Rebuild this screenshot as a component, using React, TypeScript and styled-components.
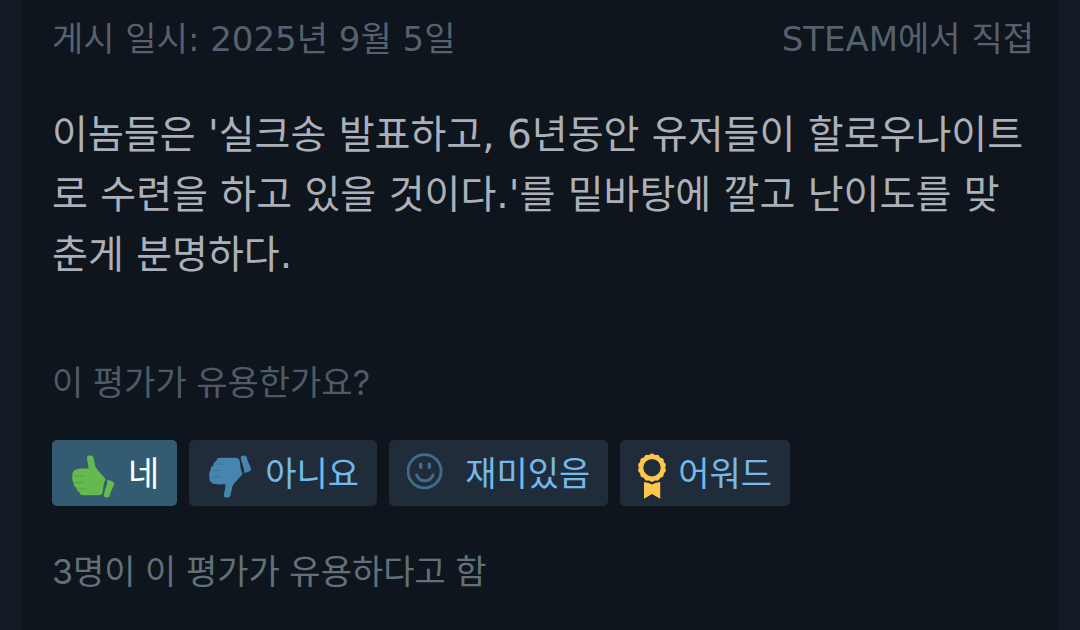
import React, { useState } from "react";
import styled, { createGlobalStyle } from "styled-components";

const GlobalStyle = createGlobalStyle`
  * { box-sizing: border-box; }
  body {
    margin: 0;
    background: #131a24;
    font-family: Inter, "Noto Sans CJK KR", sans-serif;
    font-size: 34px;
    line-height: 48px;
  }
  p { margin: 0; }
`;

const wideFont = `"DejaVu Sans", "Noto Sans CJK KR", sans-serif`;

const Review = styled.article`
  margin: 0 22px;
  min-height: 100vh;
  padding: 15px 24px 34px 30px;
  background: #0e151c;
`;

const Meta = styled.header`
  display: flex;
  justify-content: space-between;
  font-family: ${wideFont};
  color: #56616d;
`;

const Body = styled.p`
  && { margin-top: 42px; }
  padding-right: 6px;
  font-family: ${wideFont};
  font-size: 39px;
  line-height: 60px;
  color: #acb0b9;
`;

const Question = styled.p`
  && { margin: 74px 0 33px; }
  color: #4f5a67;
`;

const Votes = styled.div`
  display: flex;
  flex-wrap: wrap;
  gap: 12px;
`;

const VoteButton = styled.button<{ $active?: boolean }>`
  display: flex;
  align-items: center;
  gap: 12px;
  height: 66px;
  padding: 0 18px;
  border: 0;
  border-radius: 5px;
  font: inherit;
  white-space: nowrap;
  cursor: pointer;
  color: ${(p) => (p.$active ? "#ffffff" : "#74b9e8")};
  background: ${(p) => (p.$active ? "#335c73" : "#212c3b")};
`;

const Label = styled.span`
  padding-top: 2px;
`;

const Icon = styled.svg`
  flex: none;
  height: 52px;
`;

const Tally = styled.p`
  && { margin-top: 42px; }
  color: #62707a;
`;

function Thumb({ down = false }: { down?: boolean }) {
  const fill = down ? "#4685ae" : "#66b94e";
  const line = down ? "#3d79a1" : "#59a845";
  return (
    <Icon width="46" viewBox="0 -4.5 46 52" aria-hidden="true">
      <g transform={down ? "matrix(1 0 0 -1 0 50)" : undefined}>
        <path
          fill={fill}
          d="M17 5.5C17.3 3.6 22.4 3.2 23.4 5.8L25.3 14.8C27.3 19 31.5 22.3 35.6 27.7C33.4 31.8 33.4 36 32.6 41C31.8 43 30.4 43.8 28.5 43.8H12.8C10.4 43.8 9.7 42.4 9.4 40.6C7.6 40 6.4 38.5 6.5 36.2C4.2 35 3.2 33.2 3.6 31C2.2 29.2 2 27.4 2.5 25.4C1.8 21.5 3.4 18.6 6.5 17.8C10 16.8 14 17 18.4 17.2C19 13.5 16.6 9 17 5.5Z"
        />
        <path
          fill={fill}
          d="M37.4 28.6C39.3 28.6 43.1 29.8 44 31.4C44.5 34.6 40.4 39.2 39.5 45C37.6 46.5 34.2 46.2 33.7 44C34.2 39 37.4 34 37.4 28.6Z"
        />
        <path fill="none" stroke={line} strokeWidth="1.3" strokeLinecap="round" d="M5 24.5H13M5.5 31H13.5M9 37.3H15" />
      </g>
    </Icon>
  );
}

function Smile() {
  return (
    <Icon width="46" viewBox="0 -2 46 52" aria-hidden="true">
      <g fill="none" stroke="#3f6e8b" strokeLinecap="round">
        <circle cx="17.5" cy="22.2" r="16.6" strokeWidth="2.8" />
        <path strokeWidth="3.4" d="M13.7 15.2V18.4M22.3 15.2V18.4" />
        <path strokeWidth="3" d="M9.7 26C12.3 33.6 23.3 33.6 25.9 26" />
      </g>
    </Icon>
  );
}

function Award() {
  const scallops = Array.from({ length: 14 }, (_, i) => (i * 2 * Math.PI) / 14);
  return (
    <Icon width="28" viewBox="0 -2 28 52" aria-hidden="true">
      <circle cx="14" cy="18.7" r="11" fill="none" stroke="#fdc74c" strokeWidth="4.6" />
      {scallops.map((a) => (
        <circle key={a} cx={14 + 11.8 * Math.sin(a)} cy={18.7 - 11.8 * Math.cos(a)} r="2.4" fill="#fdc74c" />
      ))}
      <path fill="#fdc74c" d="M6 33L10.6 34L14 35.4L17.4 34L22.2 33V49.8L14 45L6 49.8Z" />
    </Icon>
  );
}

export default function App() {
  const [vote, setVote] = useState<"yes" | "no">("yes");
  return (
    <>
      <GlobalStyle />
      <Review lang="ko">
        <Meta>
          <span>게시 일시: 2025년 9월 5일</span>
          <span>STEAM에서 직접</span>
        </Meta>
        <Body>
          이놈들은 '실크송 발표하고, 6년동안 유저들이 할로우나이트로 수련을 하고 있을 것이다.'를 밑바탕에 깔고 난이도를 맞춘게 분명하다.
        </Body>
        <Question>이 평가가 유용한가요?</Question>
        <Votes>
          <VoteButton type="button" $active={vote === "yes"} onClick={() => setVote("yes")}>
            <Thumb />
            <Label>네</Label>
          </VoteButton>
          <VoteButton type="button" $active={vote === "no"} onClick={() => setVote("no")}>
            <Thumb down />
            <Label>아니요</Label>
          </VoteButton>
          <VoteButton type="button">
            <Smile />
            <Label>재미있음</Label>
          </VoteButton>
          <VoteButton type="button">
            <Award />
            <Label>어워드</Label>
          </VoteButton>
        </Votes>
        <Tally>3명이 이 평가가 유용하다고 함</Tally>
      </Review>
    </>
  );
}
